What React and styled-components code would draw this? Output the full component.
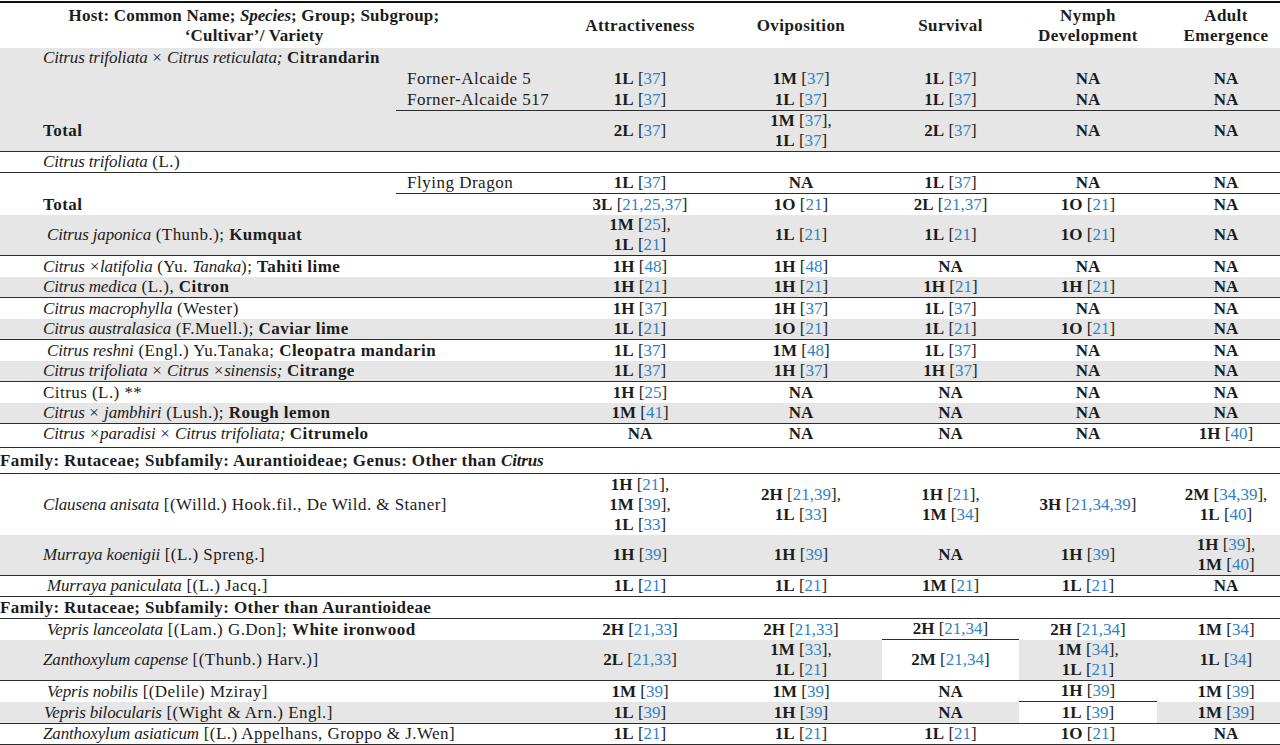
import React from 'react';
import styled, { createGlobalStyle } from 'styled-components';

const GlobalStyle = createGlobalStyle`
  html, body { margin: 0; padding: 0; background: #ffffff; }
`;

const Page = styled.div`
  width: 1280px;
  height: 745px;
  overflow: hidden;
  padding-top: 1px;
  box-sizing: border-box;
`;

const Table = styled.table`
  table-layout: fixed;
  width: 1295px;
  border-spacing: 0;
  border-collapse: separate;
  font-family: "Liberation Serif", "Times New Roman", serif;
  font-size: 17px;
  color: #1c1c1c;
`;

const HeadCell = styled.th`
  border-top: 2px solid #111;
  font-weight: bold;
  text-align: center;
  vertical-align: middle;
  line-height: 20px;
  letter-spacing: ${p => (p.$tight ? 0.2 : 0.4)}px;
  padding: 0 ${p => p.$pr || 0}px 0 0;
  white-space: nowrap;
`;

const Row = styled.tr`
  height: ${p => p.$h}px;
  background: ${p => (p.$shade ? '#e6e6e6' : '#ffffff')};
`;

const Cell = styled.td`
  vertical-align: middle;
  line-height: 20px;
  padding: 0 0 ${p => p.$pb || 0}px 0;
  white-space: nowrap;
  border-bottom: ${p => (p.$line ? '1px solid #2c2c2c' : 'none')};
  background: ${p => (p.$white ? '#ffffff' : 'transparent')};
`;

const NameCell = styled(Cell)`
  text-align: left;
  padding-left: ${p => p.$indent}px;
  letter-spacing: 0.45px;
`;

const CultivarCell = styled(Cell)`
  text-align: left;
  padding-left: 11px;
  letter-spacing: 0.5px;
`;

const ValueCell = styled(Cell)`
  text-align: center;
`;

const FamilyCell = styled(Cell)`
  text-align: left;
  font-weight: bold;
  letter-spacing: 0.4px;
`;

const I = styled.i`
  font-style: italic;
  letter-spacing: -0.15px;
`;

const B = styled.b`
  font-weight: bold;
`;

const Grade = styled.span`
  font-weight: bold;
`;

const Ref = styled.span`
  color: #2f83c6;
`;

const Value = ({ v }) => {
  if (!v) return null;
  if (v === 'NA') return <Grade>NA</Grade>;
  const parts = v.split('|');
  return parts.map((p, i) => {
    const [g, r] = p.split(' ');
    return (
      <React.Fragment key={i}>
        {i > 0 && <br />}
        <Grade>{g}</Grade> [<Ref>{r}</Ref>]{i < parts.length - 1 ? ',' : ''}
      </React.Fragment>
    );
  });
};

const rows = [
  { h: 19, shade: true, name: <><I>Citrus trifoliata</I> × <I>Citrus reticulata;</I> <B>Citrandarin</B></> },
  { h: 21, shade: true, cultivar: 'Forner-Alcaide 5', vals: ['1L 37', '1M 37', '1L 37', 'NA', 'NA'] },
  { h: 22, shade: true, cultivar: 'Forner-Alcaide 517', vals: ['1L 37', '1L 37', '1L 37', 'NA', 'NA'], partial: true },
  { h: 41, shade: true, total: true, vals: ['2L 37', '1M 37|1L 37', '2L 37', 'NA', 'NA'], line: true },
  { h: 21, name: <><I>Citrus trifoliata</I> (L.)</>, line: true },
  { h: 21, cultivar: 'Flying Dragon', vals: ['1L 37', 'NA', '1L 37', 'NA', 'NA'], partial: true },
  { h: 21, total: true, vals: ['3L 21,25,37', '1O 21', '2L 21,37', '1O 21', 'NA'] },
  { h: 41, shade: true, indent: 47, name: <><I>Citrus japonica</I> (Thunb.); <B>Kumquat</B></>, vals: ['1M 25|1L 21', '1L 21', '1L 21', '1O 21', 'NA'], line: true },
  { h: 21, name: <><I>Citrus ×latifolia</I> (Yu. <I>Tanaka</I>); <B>Tahiti lime</B></>, vals: ['1H 48', '1H 48', 'NA', 'NA', 'NA'] },
  { h: 21, shade: true, name: <><I>Citrus medica</I> (L.), <B>Citron</B></>, vals: ['1H 21', '1H 21', '1H 21', '1H 21', 'NA'], line: true },
  { h: 21, name: <><I>Citrus macrophylla</I> (Wester)</>, vals: ['1H 37', '1H 37', '1L 37', 'NA', 'NA'] },
  { h: 21, shade: true, name: <><I>Citrus australasica</I> (F.Muell.); <B>Caviar lime</B></>, vals: ['1L 21', '1O 21', '1L 21', '1O 21', 'NA'], line: true },
  { h: 21, indent: 47, name: <><I>Citrus reshni</I> (Engl.) Yu.Tanaka; <B>Cleopatra mandarin</B></>, vals: ['1L 37', '1M 48', '1L 37', 'NA', 'NA'] },
  { h: 21, shade: true, name: <><I>Citrus trifoliata</I> × <I>Citrus ×sinensis;</I> <B>Citrange</B></>, vals: ['1L 37', '1H 37', '1H 37', 'NA', 'NA'], line: true },
  { h: 21, name: <>Citrus (L.) **</>, vals: ['1H 25', 'NA', 'NA', 'NA', 'NA'] },
  { h: 21, shade: true, name: <><I>Citrus</I> × <I>jambhiri</I> (Lush.); <B>Rough lemon</B></>, vals: ['1M 41', 'NA', 'NA', 'NA', 'NA'], line: true },
  { h: 24, pb: 3, name: <><I>Citrus ×paradisi</I> × <I>Citrus trifoliata;</I> <B>Citrumelo</B></>, vals: ['NA', 'NA', 'NA', 'NA', '1H 40'], line: true },
  { h: 26, family: <>Family: Rutaceae; Subfamily: Aurantioideae; Genus: Other than <I>Citrus</I></>, line: true },
  { h: 61, name: <><I>Clausena anisata</I> [(Willd.) Hook.fil., De Wild. &amp; Staner]</>, vals: ['1H 21|1M 39|1L 33', '2H 21,39|1L 33', '1H 21|1M 34', '3H 21,34,39', '2M 34,39|1L 40'] },
  { h: 41, shade: true, name: <><I>Murraya koenigii</I> [(L.) Spreng.]</>, vals: ['1H 39', '1H 39', 'NA', '1H 39', '1H 39|1M 40'], line: true },
  { h: 21, indent: 47, name: <><I>Murraya paniculata</I> [(L.) Jacq.]</>, vals: ['1L 21', '1L 21', '1M 21', '1L 21', 'NA'], line: true },
  { h: 22, family: <>Family: Rutaceae; Subfamily: Other than Aurantioideae</>, line: true },
  { h: 20, indent: 47, name: <><I>Vepris lanceolata</I> [(Lam.) G.Don]; <B>White ironwood</B></>, vals: ['2H 21,33', '2H 21,33', '2H 21,34', '2H 21,34', '1M 34'], cellLine: [2] },
  { h: 41, shade: true, name: <><I>Zanthoxylum capense</I> [(Thunb.) Harv.)]</>, vals: ['2L 21,33', '1M 33|1L 21', '2M 21,34', '1M 34|1L 21', '1L 34'], line: true, cellWhite: [2] },
  { h: 21, indent: 47, name: <><I>Vepris nobilis</I> [(Delile) Mziray]</>, vals: ['1M 39', '1M 39', 'NA', '1H 39', '1M 39'], cellLine: [3] },
  { h: 22, shade: true, indent: 44, name: <><I>Vepris bilocularis</I> [(Wight &amp; Arn.) Engl.]</>, vals: ['1L 39', '1H 39', 'NA', '1L 39', '1M 39'], line: true, cellWhite: [3] },
  { h: 21, name: <><I>Zanthoxylum asiaticum</I> [(L.) Appelhans, Groppo &amp; J.Wen]</>, vals: ['1L 21', '1L 21', '1L 21', '1O 21', 'NA'], line: true },
];

const DataRow = ({ r }) => {
  if (r.family) {
    return (
      <Row $h={r.h} $shade={r.shade}>
        <FamilyCell colSpan={7} $line={r.line}>{r.family}</FamilyCell>
      </Row>
    );
  }
  const vals = r.vals || ['', '', '', '', ''];
  const first = [];
  if (r.cultivar) {
    first.push(<NameCell key="n" $indent={43} $line={r.line} />);
    first.push(<CultivarCell key="c" $line={r.line || r.partial}>{r.cultivar}</CultivarCell>);
  } else if (r.total) {
    first.push(<NameCell key="n" $indent={43} $line={r.line}><B>Total</B></NameCell>);
    first.push(<CultivarCell key="c" $line={r.line || r.partial} />);
  } else {
    first.push(
      <NameCell key="n" colSpan={2} $indent={r.indent || 43} $line={r.line} $pb={r.pb}>
        {r.name}
      </NameCell>
    );
  }
  return (
    <Row $h={r.h} $shade={r.shade}>
      {first}
      {vals.map((v, i) => (
        <ValueCell
          key={i}
          $pb={r.pb}
          $line={r.line || r.partial || (r.cellLine && r.cellLine.includes(i))}
          $white={r.cellWhite && r.cellWhite.includes(i)}
        >
          <Value v={v} />
        </ValueCell>
      ))}
    </Row>
  );
};

export default function App() {
  return (
    <Page>
      <GlobalStyle />
      <Table>
        <colgroup>
          <col style={{ width: 396 }} />
          <col style={{ width: 164 }} />
          <col style={{ width: 160 }} />
          <col style={{ width: 162 }} />
          <col style={{ width: 137 }} />
          <col style={{ width: 138 }} />
          <col style={{ width: 138 }} />
        </colgroup>
        <thead>
          <Row $h={47}>
            <HeadCell colSpan={2} $pr={52} $tight>
              Host: Common Name; <I>Species</I>; Group; Subgroup;
              <br />
              ‘Cultivar’/ Variety
            </HeadCell>
            <HeadCell>Attractiveness</HeadCell>
            <HeadCell>Oviposition</HeadCell>
            <HeadCell>Survival</HeadCell>
            <HeadCell>
              Nymph
              <br />
              Development
            </HeadCell>
            <HeadCell>
              Adult
              <br />
              Emergence
            </HeadCell>
          </Row>
        </thead>
        <tbody>
          {rows.map((r, i) => (
            <DataRow key={i} r={r} />
          ))}
        </tbody>
      </Table>
    </Page>
  );
}
